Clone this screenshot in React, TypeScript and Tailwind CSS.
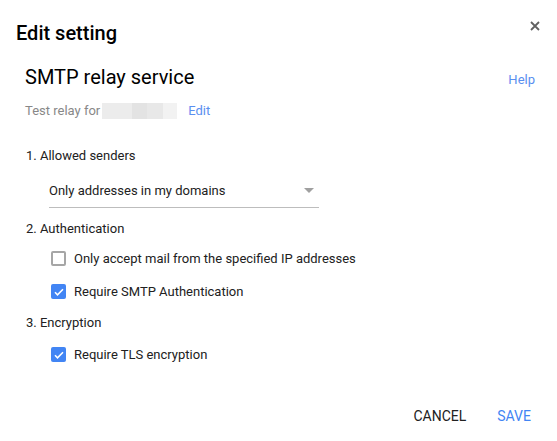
import { useState } from 'react'

function Checkbox({ checked, onChange }: { checked: boolean; onChange: () => void }) {
  return (
    <button
      onClick={onChange}
      className={`w-[15px] h-[15px] rounded-[2px] flex items-center justify-center shrink-0 ${
        checked ? 'bg-[#4285f4]' : 'border-2 border-[#a6a6a6] bg-white'
      }`}
    >
      {checked && (
        <svg width="12" height="12" viewBox="0 0 24 24" fill="none">
          <path d="M4 12.5l5 5L20 6.5" stroke="white" strokeWidth="3.2" />
        </svg>
      )}
    </button>
  )
}

export default function App() {
  const [ipOnly, setIpOnly] = useState(false)
  const [smtpAuth, setSmtpAuth] = useState(true)
  const [tls, setTls] = useState(true)

  return (
    <div
      className="w-[557px] h-[441px] bg-white relative text-[#212121] overflow-hidden"
      style={{ fontFamily: 'Roboto, "Liberation Sans", sans-serif' }}
    >
      {/* Header */}
      <div className="flex items-start justify-between pl-4 pr-[17px] pt-[20px]">
        <h1 className="text-[20px] leading-[26px] font-medium text-black">Edit setting</h1>
        <button className="mt-[1px] text-[#616161]">
          <svg width="10" height="10" viewBox="0 0 10 10">
            <path d="M1 1L9 9M9 1L1 9" stroke="currentColor" strokeWidth="1.8" />
          </svg>
        </button>
      </div>

      {/* Setting title */}
      <div className="flex items-baseline justify-between pl-[25px] pr-[22px] mt-[19px]">
        <h2 className="text-[20px] leading-[24px] text-black">SMTP relay service</h2>
        <a className="text-[13px] text-[#5a8ff0]">Help</a>
      </div>

      <div className="flex items-center pl-[25px] mt-[13px] h-4 text-[13px]">
        <span className="text-[#888888]">Test relay for</span>
        <span className="flex h-[16px] ml-[2px]">
          <span className="w-[30px] bg-[#ececec]" />
          <span className="w-[15px] bg-[#e3e3e3]" />
          <span className="w-[16px] bg-[#e8e8e8]" />
          <span className="w-[14px] bg-[#f2f2f2]" />
        </span>
        <a className="ml-[11px] text-[#5a8ff0]">Edit</a>
      </div>

      {/* Sections */}
      <div className="pl-[26px] mt-[29px] text-[13px]">
        <p className="leading-[16px]">1. Allowed senders</p>

        <div className="ml-[23px] mt-[11px] w-[270px] h-[33px] border-b border-[#bdbdbd] flex items-start justify-between pt-[8px]">
          <span className="leading-[16px]">Only addresses in my domains</span>
          <svg width="10" height="5" viewBox="0 0 10 5" className="mt-[5px] mr-[5px]">
            <path d="M0 0h10L5 5z" fill="#a0a0a0" />
          </svg>
        </div>

        <p className="leading-[16px] mt-[13px]">2. Authentication</p>

        <div className="ml-[25px] mt-[14px] flex flex-col gap-[17px]">
          <label className="flex items-center gap-[8px] h-[16px]">
            <Checkbox checked={ipOnly} onChange={() => setIpOnly(!ipOnly)} />
            <span>Only accept mail from the specified IP addresses</span>
          </label>
          <label className="flex items-center gap-[8px] h-[16px]">
            <Checkbox checked={smtpAuth} onChange={() => setSmtpAuth(!smtpAuth)} />
            <span>Require SMTP Authentication</span>
          </label>
        </div>

        <p className="leading-[16px] mt-[15px]">3. Encryption</p>

        <div className="ml-[25px] mt-[16px]">
          <label className="flex items-center gap-[8px] h-[16px]">
            <Checkbox checked={tls} onChange={() => setTls(!tls)} />
            <span>Require TLS encryption</span>
          </label>
        </div>
      </div>

      {/* Actions */}
      <div className="flex justify-end gap-[31px] pr-[26px] mt-[43px] text-[14px] leading-[20px]">
        <button className="text-[#212121]">CANCEL</button>
        <button className="text-[#4285f4]">SAVE</button>
      </div>
    </div>
  )
}
